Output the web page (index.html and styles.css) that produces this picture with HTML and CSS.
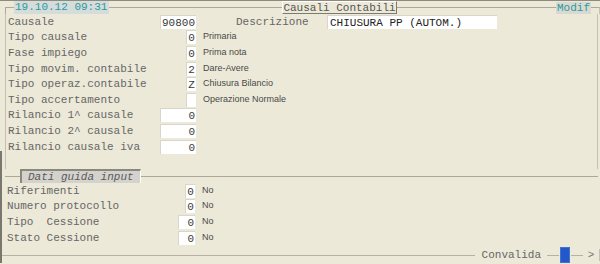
FILE: index.html
```html
<html lang="it">
<head>
    <meta charset="UTF-8">
    <title>Causali Contabili</title>
    <link rel="stylesheet" href="styles.css">
</head>
<body>
<div class="screen">
    <div class="leftbar"></div>
    <div class="head">
        <span class="corner"></span>
        <span class="date">19.10.12 09:31</span>
        <span class="rule fixed"></span>
        <span class="title">Causali Contabili</span>
        <span class="rule"></span>
        <span class="mode">Modif</span>
        <span class="rule end"></span>
    </div>

    <div class="frame">
        <div class="row">
            <span class="lbl">Causale</span>
            <span class="fld wide">90800</span>
            <span class="extra">
                <span class="dlbl">Descrizione</span>
                <span class="fld desc">CHIUSURA PP (AUTOM.)</span>
            </span>
        </div>
        <div class="row">
            <span class="lbl">Tipo causale</span>
            <span class="fld one">0</span>
            <span class="note">Primaria</span>
        </div>
        <div class="row">
            <span class="lbl">Fase impiego</span>
            <span class="fld one">0</span>
            <span class="note">Prima nota</span>
        </div>
        <div class="row">
            <span class="lbl">Tipo movim. contabile</span>
            <span class="fld one">2</span>
            <span class="note">Dare-Avere</span>
        </div>
        <div class="row">
            <span class="lbl">Tipo operaz.contabile</span>
            <span class="fld one">Z</span>
            <span class="note">Chiusura Bilancio</span>
        </div>
        <div class="row">
            <span class="lbl">Tipo accertamento</span>
            <span class="fld one"></span>
            <span class="note">Operazione Normale</span>
        </div>
        <div class="row">
            <span class="lbl">Rilancio 1^ causale</span>
            <span class="fld wide">0</span>
        </div>
        <div class="row">
            <span class="lbl">Rilancio 2^ causale</span>
            <span class="fld wide">0</span>
        </div>
        <div class="row">
            <span class="lbl">Rilancio causale iva</span>
            <span class="fld wide">0</span>
        </div>
    </div>

    <div class="section">
        <span class="rule lead"></span>
        <span class="tab">Dati guida input</span>
        <span class="rule"></span>
    </div>

    <div class="lower">
        <div class="row">
            <span class="lbl">Riferimenti</span>
            <span class="fld one">0</span>
            <span class="note">No</span>
        </div>
        <div class="row">
            <span class="lbl">Numero protocollo</span>
            <span class="fld one">0</span>
            <span class="note">No</span>
        </div>
        <div class="row">
            <span class="lbl">Tipo&nbsp; Cessione</span>
            <span class="fld two">0</span>
            <span class="note">No</span>
        </div>
        <div class="row">
            <span class="lbl">Stato Cessione</span>
            <span class="fld two">0</span>
            <span class="note">No</span>
        </div>
    </div>

    <div class="foot">
        <span class="rule"></span>
        <span class="cmd">Convalida</span>
        <span class="rule short"></span>
        <span class="cursor"></span>
        <span class="rule short"></span>
        <span class="arrow">&gt;</span>
    </div>
</div>
</body>
</html>
```

FILE: styles.css
```css
body {
    margin: 0;
    background-color: #ece9d8;
    font-family: "Liberation Mono", "Courier New", monospace;
    font-size: 11px;
    color: #666;
}
.screen {
    position: relative;
    width: 600px;
    height: 264px;
    box-sizing: border-box;
    border-top: 1px solid #8e8b7d;
    background-color: #ece9d8;
    display: flex;
    flex-direction: column;
}
.leftbar {
    position: absolute;
    left: 0;
    top: 150px;
    width: 2px;
    height: 112px;
    background-color: #7a786c;
}

/* header line */
.head {
    height: 13px;
    display: flex;
    align-items: stretch;
}
.corner {
    width: 8px;
    margin-left: 5px;
    margin-top: 6px;
    border-top: 1px solid #aca899;
    border-left: 1px solid #aca899;
}
.rule {
    flex: 1;
    align-self: center;
    height: 0;
    border-top: 1px solid #aca899;
}
.rule.fixed {
    flex: none;
    width: 173px;
}
.rule.end {
    flex: none;
    width: 8px;
    align-self: stretch;
    height: auto;
    margin-top: 6px;
    border-right: 1px solid #c4c1b4;
}
.date {
    width: 94px;
    padding-left: 1px;
    line-height: 13px;
    background-color: #d5dcdc;
    color: #2d9a9a;
}
.title {
    width: 113px;
    line-height: 12px;
    text-align: center;
    border-top: 1px solid #ffffff;
    border-left: 1px solid #ffffff;
    border-right: 1px solid #7d7b70;
    border-bottom: 1px solid #7d7b70;
    color: #555;
}
.mode {
    width: 35px;
    margin-top: 1px;
    line-height: 12px;
    text-align: center;
    background-color: #d9d9d3;
    color: #2d9a9a;
}

/* field rows */
.frame {
    margin-left: 5px;
    margin-right: 2px;
    border-left: 1px solid #c4c1b4;
    border-right: 1px solid #c4c1b4;
    height: 155px;
}
.lower {
    margin-left: 5px;
    margin-right: 2px;
    height: 63px;
}
.row {
    height: 15.6px;
    display: flex;
    align-items: center;
}
.lbl {
    width: 152px;
    padding-left: 2px;
    white-space: pre;
}
.fld {
    box-sizing: border-box;
    height: 14px;
    line-height: 14px;
    background-color: #ffffff;
    border-top: 1px solid #d8d6cc;
    border-left: 1px solid #d8d6cc;
    text-align: right;
    padding-right: 1px;
    color: #3a3a3a;
}
.fld.wide { width: 36px; }
.fld.one { width: 10px; margin-left: 26px; text-align: center; padding: 0; }
.fld.two { width: 17px; margin-left: 19px; }
.note {
    margin-left: 7px;
    font-family: "Liberation Sans", Arial, sans-serif;
    font-size: 9px;
    color: #4a4a4a;
    position: relative;
    top: -1px;
}
.extra {
    display: flex;
    align-items: center;
}
.dlbl {
    width: 91px;
    margin-left: 40px;
}
.fld.desc {
    width: 170px;
    text-align: left;
    padding-left: 2px;
    color: #222;
}

/* section divider */
.section {
    height: 14px;
    display: flex;
    align-items: stretch;
}
.rule.lead {
    flex: none;
    width: 15px;
    margin-left: 5px;
}
.tab {
    box-sizing: border-box;
    width: 121px;
    line-height: 12px;
    padding-left: 6px;
    background-color: #d4d2cc;
    border-top: 2px solid #8a887c;
    border-left: 2px solid #8a887c;
    border-right: 1px solid #ffffff;
    font-style: italic;
    color: #5a5a5a;
}
.section .rule:last-child {
    margin-right: 2px;
}

/* footer */
.foot {
    height: 16px;
    margin-top: 1px;
    display: flex;
    align-items: center;
}
.foot .rule {
    border-top-color: #b5b2a4;
}
.cmd {
    padding: 0 6px 0 7px;
}
.rule.short {
    flex: none;
    width: 12px;
}
.cursor {
    width: 8px;
    height: 14px;
    background-color: #2358c9;
    border: 1px solid #4070d8;
    margin: 0 1px;
}
.arrow {
    width: 16px;
    text-align: center;
    border-right: 1px solid #c4c1b4;
    color: #777;
}
```
